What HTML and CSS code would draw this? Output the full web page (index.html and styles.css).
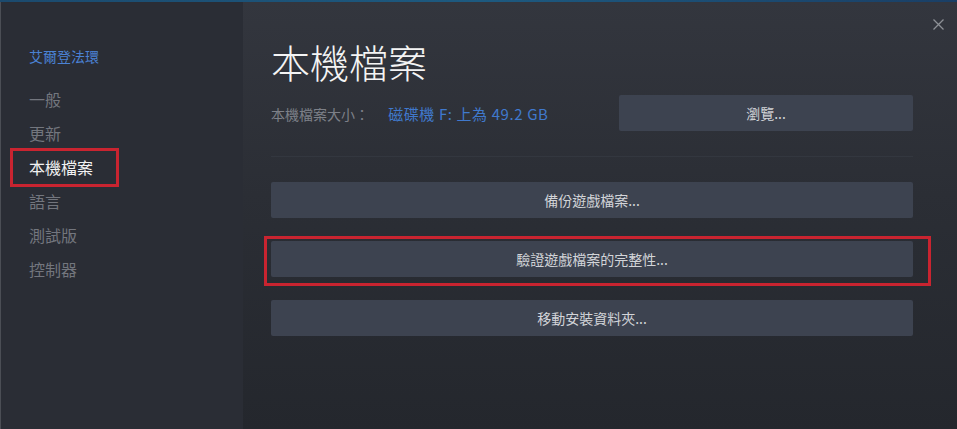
FILE: index.html
```html
<!DOCTYPE html>
<html lang="zh-Hant">
<head>
    <meta charset="UTF-8">
    <title>本機檔案</title>
    <link rel="stylesheet" href="styles.css">
</head>
<body>
    <div class="top-line"></div>
    <div class="window">
        <!-- Sidebar -->
        <aside class="sidebar">
            <div class="game-title">艾爾登法環</div>
            <ul class="nav">
                <li>一般</li>
                <li>更新</li>
                <li class="active marked">本機檔案</li>
                <li>語言</li>
                <li>測試版</li>
                <li>控制器</li>
            </ul>
        </aside>

        <!-- Main panel -->
        <main class="panel">
            <span class="close">
                <svg width="11" height="11" viewBox="0 0 11 11">
                    <path d="M0.5 0.5 L10.5 10.5 M10.5 0.5 L0.5 10.5" stroke="#8d9096" stroke-width="1.3" fill="none"/>
                </svg>
            </span>
            <h1 class="panel-title">本機檔案</h1>
            <div class="size-row">
                <div class="size-info">
                    <span class="size-label">本機檔案大小：</span>
                    <span class="size-value">磁碟機 F: 上為 49.2 GB</span>
                </div>
                <button class="btn browse">瀏覽...</button>
            </div>
            <div class="divider"></div>
            <div class="actions">
                <button class="btn">備份遊戲檔案...</button>
                <button class="btn marked">驗證遊戲檔案的完整性...</button>
                <button class="btn">移動安裝資料夾...</button>
            </div>
        </main>
    </div>
</body>
</html>
```

FILE: styles.css
```css
body {
    margin: 0;
    width: 957px;
    height: 429px;
    overflow: hidden;
    background-color: #2a2d35;
    font-family: "Noto Sans CJK TC", "Noto Sans", sans-serif;
}

.top-line {
    height: 2px;
    background: linear-gradient(90deg, #1b4a6e, #1d5a80 50%, #1a3f66);
}

.window {
    display: flex;
    height: 427px;
}

/* Sidebar */
.sidebar {
    width: 243px;
    border-left: 1px solid #4b4e55;
    background-color: #2a2d35;
    padding-top: 44px;
    box-sizing: border-box;
}

.game-title {
    padding-left: 28px;
    font-size: 14px;
    line-height: 20px;
    color: #4b82d4;
    margin-bottom: 16px;
}

.nav {
    list-style: none;
    margin: 0;
    padding: 0;
}

.nav li {
    position: relative;
    padding-left: 28px;
    font-size: 16px;
    line-height: 34px;
    color: #73767e;
}

.nav li.active {
    color: #f2f2f2;
}

.nav li.marked::after {
    content: "";
    position: absolute;
    left: 9px;
    top: -2px;
    width: 103px;
    height: 33px;
    border: 3px solid #c92430;
}

/* Main panel */
.panel {
    position: relative;
    flex: 1;
    padding: 35px 44px 0 28px;
    background: linear-gradient(180deg, #33363e 0%, #2b2e35 45%, #24272d 100%);
}

.close {
    position: absolute;
    top: 9px;
    right: 13px;
}

.panel-title {
    margin: 0 0 10px;
    font-size: 39px;
    font-weight: 300;
    line-height: 48px;
    color: #f4f4f4;
}

.size-row {
    display: flex;
    align-items: center;
}

.size-info {
    flex: 1;
    font-size: 14px;
}

.size-label {
    color: #7d8088;
    margin-right: 16px;
}

.size-value {
    color: #4079cd;
    font-size: 15px;
    letter-spacing: 0.6px;
}

.btn {
    position: relative;
    display: block;
    height: 36px;
    border: none;
    border-radius: 2px;
    background-color: #3d4350;
    color: #d2d4d8;
    font-family: inherit;
    font-size: 14px;
    cursor: pointer;
}

.btn.browse {
    width: 294px;
}

.divider {
    height: 1px;
    margin: 25px 0 25px;
    background-color: #33373f;
}

.actions {
    display: flex;
    flex-direction: column;
    gap: 23px;
}

.actions .btn {
    width: 100%;
}

.btn.marked::after {
    content: "";
    position: absolute;
    left: -7px;
    right: -18px;
    top: -5px;
    bottom: -9px;
    border: 3px solid #c92430;
}
```
